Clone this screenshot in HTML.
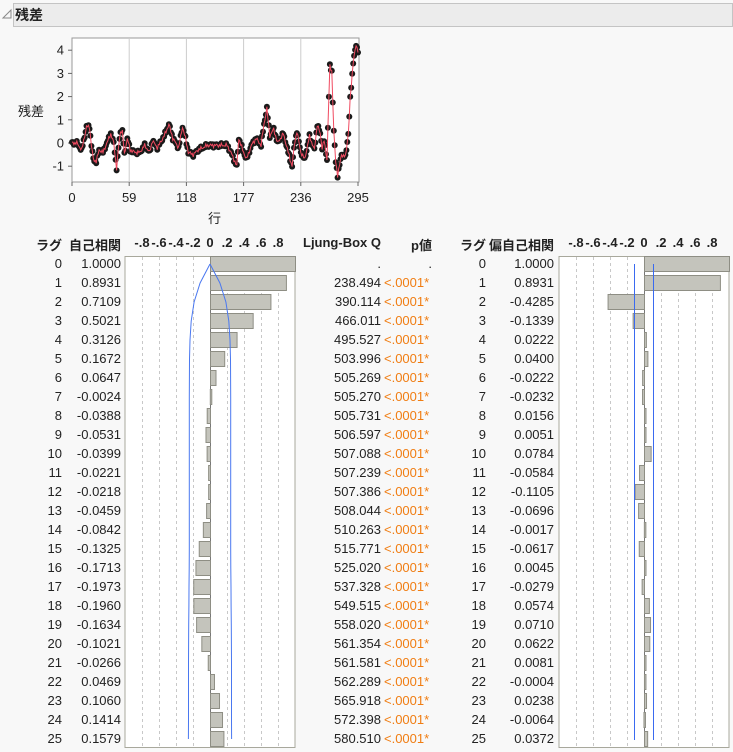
<!DOCTYPE html>
<html><head><meta charset="utf-8"><style>
body{margin:0;width:733px;height:752px;background:#f8f8f8;font-family:"Liberation Sans","Noto Sans CJK JP",sans-serif;font-size:13px;color:#222;position:relative;overflow:hidden}
.a{position:absolute;white-space:nowrap}
.r{text-align:right}
.c{text-align:center}
.b{font-weight:bold}
.o{color:#f07d12}
</style></head><body>
<div class="a" style="left:13px;top:3px;width:718px;height:22px;background:#ececec;border:1px solid #c4c4c4"></div>
<svg class="a" style="left:1px;top:8px" width="12" height="12"><path d="M2 10 L10 10 L10 2 Z" fill="none" stroke="#888"/></svg>
<div class="a b" style="left:15px;top:5px;font-size:14px">残差</div>
<div class="a" style="left:18px;top:101px">残差</div>
<div class="a" style="left:208px;top:208px">行</div>
<svg id="plot" class="a" style="left:0;top:0" width="733" height="752"></svg>
<div id="t"></div>
<script>
var svg=document.getElementById('plot'),h='';
var X0=72,X1=358,Y0=143,sy=23.2;
h+='<rect x="72" y="38" width="287" height="144" fill="#fff" stroke="#999"/>';
[59,118,177,236].forEach(function(v){var x=X0+v*(X1-X0)/295;h+='<line x1="'+x+'" y1="38" x2="'+x+'" y2="182" stroke="#ccc"/>';});
[0,59,118,177,236,295].forEach(function(v){var x=X0+v*(X1-X0)/295;h+='<line x1="'+x+'" y1="182" x2="'+x+'" y2="186" stroke="#666"/><text x="'+x+'" y="202" font-size="13" text-anchor="middle" font-family="Liberation Sans" fill="#222">'+v+'</text>';});
[-1,0,1,2,3,4].forEach(function(v){var y=Y0-v*sy;h+='<line x1="68" y1="'+y+'" x2="72" y2="'+y+'" stroke="#666"/><text x="64" y="'+(y+4.5)+'" font-size="13" text-anchor="end" font-family="Liberation Sans" fill="#222">'+v+'</text>';});
var k=[[0,0],[5,0],[10,-0.3],[15,0.7],[18,0.7],[20,-0.1],[22,-0.7],[25,-0.8],[28,-0.3],[32,-0.4],[36,0],[40,0.4],[43,0],[46,-1.1],[48,-0.2],[50,0.5],[52,0.5],[54,-0.5],[57,0.2],[60,-0.3],[65,-0.4],[70,-0.4],[75,-0.1],[80,-0.4],[83,0.1],[88,-0.2],[95,0.3],[100,0.8],[104,0.2],[110,-0.2],[114,0.7],[117,0.2],[120,-0.4],[125,-0.5],[130,-0.3],[140,-0.1],[150,-0.1],[160,-0.1],[165,-0.5],[170,-1.0],[172,0.2],[176,-0.3],[180,-0.7],[185,-0.1],[190,0.2],[195,-0.1],[198,0.8],[201,1.5],[204,0.3],[208,0.6],[212,0],[218,0.4],[223,-0.4],[227,-1.0],[230,0.1],[232,0.5],[236,-0.4],[240,-0.7],[245,0.3],[250,-0.3],[253,0.8],[256,0.4],[258,-0.2],[260,0.1],[263,-0.7],[265,2.0],[266,3.3],[268,3.1],[270,0.5],[272,-0.8],[274,-1.4],[278,-0.5],[282,-0.6],[285,0.4],[287,1.9],[290,3.5],[293,4.2],[295,4.0]];
var pts=[],j=0;
for(var i=0;i<=295;i++){while(j<k.length-2&&k[j+1][0]<i)j++;var a=k[j],b=k[j+1],t=(i-a[0])/(b[0]-a[0]);var v=a[1]+(b[1]-a[1])*Math.max(0,Math.min(1,t))+0.06*Math.sin(i*2.7)+0.04*Math.cos(i*5.1);pts.push([X0+i*(X1-X0)/295,Y0-v*sy]);}
pts.forEach(function(p){h+='<circle cx="'+p[0].toFixed(1)+'" cy="'+p[1].toFixed(1)+'" r="3" fill="#1a1a1a"/>';});
h+='<polyline fill="none" stroke="#f04a60" stroke-width="1" points="'+pts.map(function(p){return p[0].toFixed(1)+','+p[1].toFixed(1)}).join(' ')+'"/>';
var acf=[1.0000,0.8931,0.7109,0.5021,0.3126,0.1672,0.0647,-0.0024,-0.0388,-0.0531,-0.0399,-0.0221,-0.0218,-0.0459,-0.0842,-0.1325,-0.1713,-0.1973,-0.1960,-0.1634,-0.1021,-0.0266,0.0469,0.1060,0.1414,0.1579];
var lb=['.','238.494','390.114','466.011','495.527','503.996','505.269','505.270','505.731','506.597','507.088','507.239','507.386','508.044','510.263','515.771','525.020','537.328','549.515','558.020','561.354','561.581','562.289','565.918','572.398','580.510'];
var pacf=[1.0000,0.8931,-0.4285,-0.1339,0.0222,0.0400,-0.0222,-0.0232,0.0156,0.0051,0.0784,-0.0584,-0.1105,-0.0696,-0.0017,-0.0617,0.0045,-0.0279,0.0574,0.0710,0.0622,0.0081,-0.0004,0.0238,-0.0064,0.0372];
function panel(L,Z,vals){var s='<rect x="'+L+'" y="256.5" width="170" height="491" fill="#fff" stroke="#a8a89c"/>';
[-4,-3,-2,-1,1,2,3,4].forEach(function(g){var x=Z+g*17+0.5;s+='<line x1="'+x+'" y1="257" x2="'+x+'" y2="747" stroke="#c8c8c8" stroke-dasharray="3,3"/>';});
s+='<line x1="'+(Z+0.5)+'" y1="257" x2="'+(Z+0.5)+'" y2="747" stroke="#777"/>';
vals.forEach(function(v,i){var y=264+19*i,w=v*85;var x=w<0?Z+w:Z;s+='<rect x="'+(x+0.5)+'" y="'+(y-7.5)+'" width="'+Math.max(Math.abs(w),1.5)+'" height="15" fill="#c4c4bc" stroke="#8e8e84"/>';});
return s;}
h+=panel(125,210,acf);h+=panel(559,644,pacf);
var se=[0],n=296,sum=0;for(var i=1;i<=25;i++){se.push(2*Math.sqrt((1+2*sum)/n));sum+=acf[i]*acf[i];}
var lp=[],rp=[];se.forEach(function(e,i){var y=264+19*i;lp.push((210-e*85).toFixed(1)+','+y);rp.push((210+e*85).toFixed(1)+','+y);});
h+='<polyline fill="none" stroke="#4a78f0" points="'+lp.join(' ')+'"/><polyline fill="none" stroke="#4a78f0" points="'+rp.join(' ')+'"/>';
h+='<line x1="634.5" y1="264" x2="634.5" y2="740" stroke="#3a6af0"/><line x1="653.5" y1="264" x2="653.5" y2="740" stroke="#3a6af0"/>';
svg.innerHTML=h;
var t='';
function d(x,y,w,txt,cls){t+='<div class="a r '+(cls||'')+'" style="left:'+(x-w)+'px;top:'+y+'px;width:'+w+'px">'+txt+'</div>';}
function ticks(Z){var L=['-.8','-.6','-.4','-.2','0','.2','.4','.6','.8'];L.forEach(function(s,i){var x=Z+(i-4)*17;t+='<div class="a c b" style="left:'+(x-10)+'px;top:235px;width:20px">'+s+'</div>';});}
d(62,235,40,'ラグ','b');d(121,235,60,'自己相関','b');ticks(210);
d(381,235,100,'Ljung-Box Q','b');d(432,235,40,'p値','b');
d(486,235,40,'ラグ','b');d(554,235,80,'偏自己相関','b');ticks(644);
for(var i=0;i<=25;i++){var y=256+19*i;
d(62,y,30,i);d(121,y,60,acf[i].toFixed(4));d(381,y,80,lb[i]);
if(i)t+='<div class="a o" style="left:384px;top:'+y+'px">&lt;.0001*</div>';else d(432,y,20,'.');
d(486,y,30,i);d(554,y,60,pacf[i].toFixed(4));}
document.getElementById('t').innerHTML=t;
</script>
</body></html>
